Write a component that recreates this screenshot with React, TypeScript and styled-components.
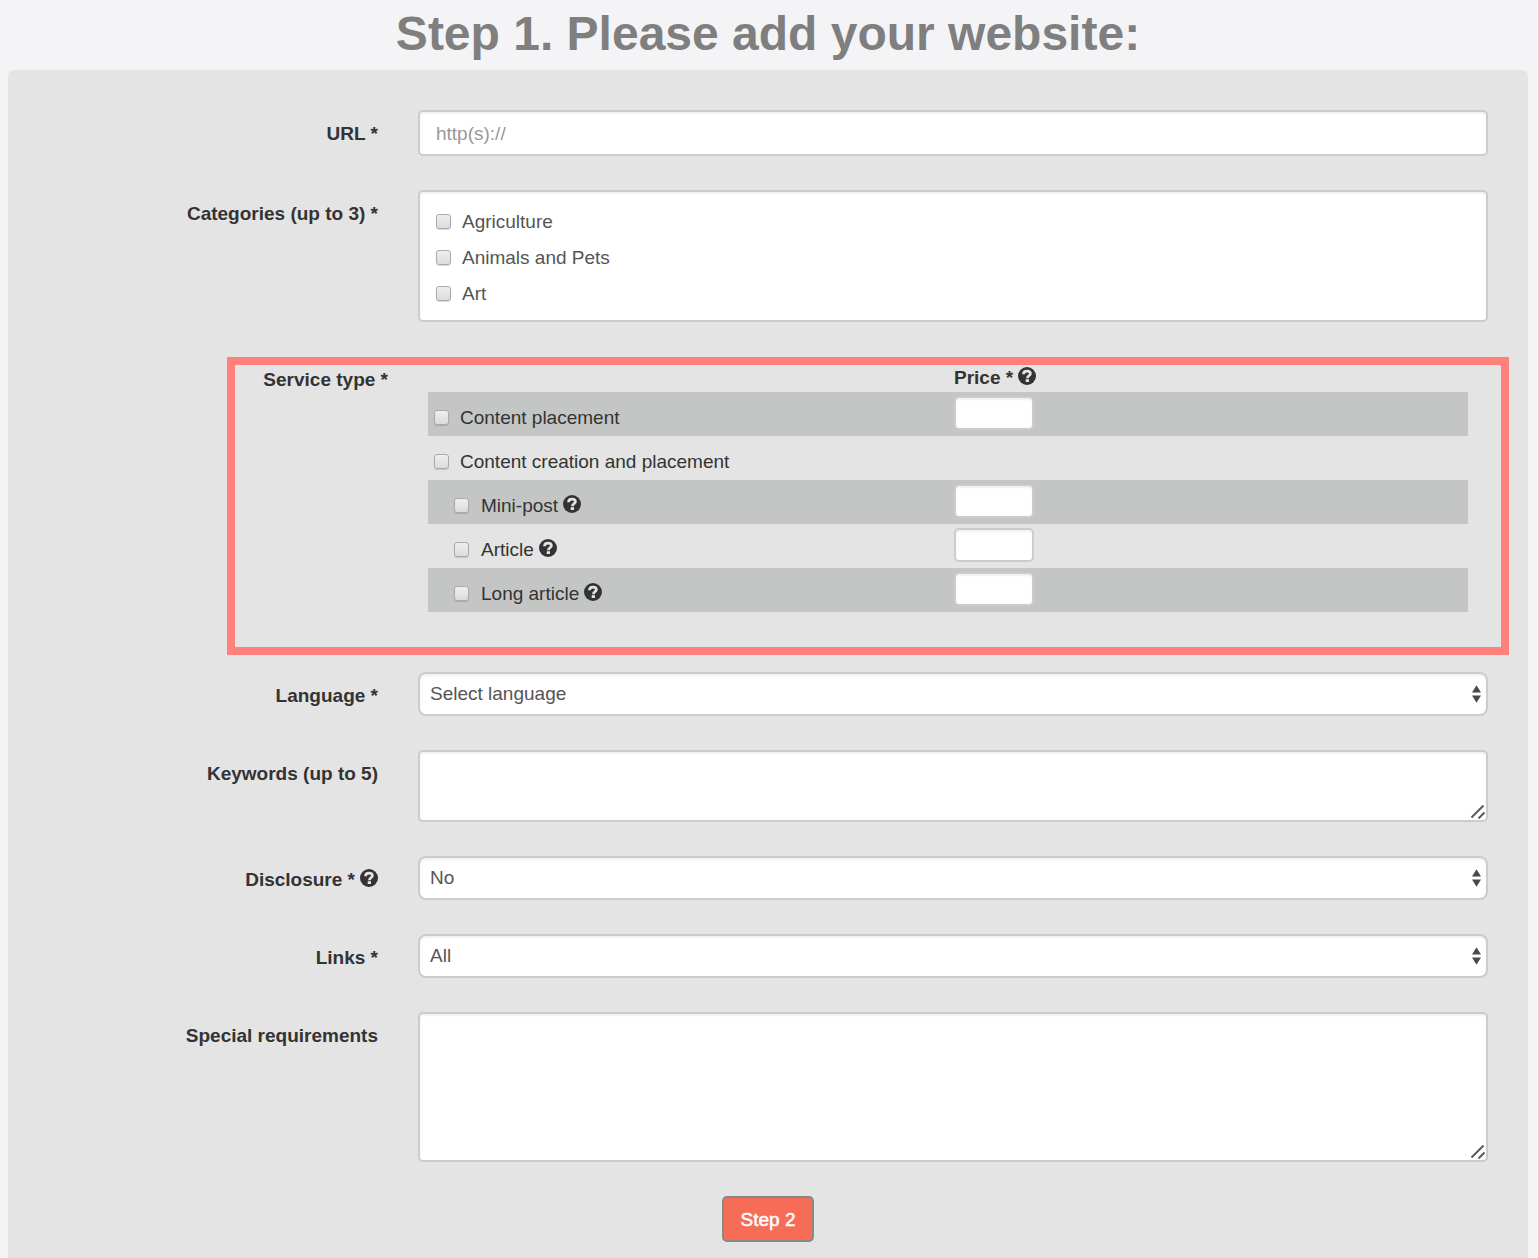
import React from 'react';
import styled, { createGlobalStyle, css } from 'styled-components';

const GlobalStyle = createGlobalStyle`
  *, *::before, *::after { box-sizing: border-box; }
  body {
    margin: 0;
    background: #f4f4f7;
    color: #333;
    font: 19px/24px "Helvetica Neue", "Liberation Sans", Arial, sans-serif;
  }
`;

const Page = styled.main`
  padding: 0 10px 0 8px;
`;

const Title = styled.h1`
  margin: 0;
  padding: 6px 0 8px;
  color: #7f7f7f;
  font-size: 48px;
  line-height: 56px;
  text-align: center;
`;

const Panel = styled.form`
  display: flex;
  flex-direction: column;
  gap: 34px;
  padding: 40px 20px;
  border-radius: 6px;
  background: #e4e4e4;
`;

const Row = styled.div`
  display: grid;
  grid-template-columns: 1fr 3fr;
`;

const labelText = css`
  padding: 12px 20px 0 0;
  font-weight: bold;
  text-align: right;
`;

const Label = styled.label`
  ${labelText}
`;

const GroupLabel = styled.div`
  ${labelText}
`;

const Field = styled.div`
  position: relative;
  margin: 0 20px;
`;

const box = css`
  display: block;
  width: 100%;
  border: 2px solid #ccc;
  border-radius: 5px;
  background: #fff;
  box-shadow: inset 0 2px 2px rgba(0, 0, 0, 0.06);
  color: #555;
  font: inherit;
  outline: none;
`;

const TextInput = styled.input`
  ${box}
  height: 46px;
  padding: 2px 16px 0;
  &::placeholder { color: #999; opacity: 1; }
`;

const TextArea = styled.textarea<{ $height: number }>`
  ${box}
  height: ${(p) => p.$height}px;
  padding: 8px 16px;
  resize: vertical;
  &::-webkit-resizer { display: none; }
`;

const Select = styled.select`
  ${box}
  height: 44px;
  padding: 0 30px 0 10px;
  border-radius: 8px;
  appearance: none;
`;

const Arrows = styled.svg`
  position: absolute;
  top: 12px;
  right: 6px;
  pointer-events: none;
`;

const Grip = styled.svg`
  position: absolute;
  right: 3px;
  bottom: 3px;
  pointer-events: none;
`;

const CategoryList = styled.div`
  ${box}
  padding: 11px 16px 9px;
`;

const CheckLabel = styled.label<{ $nested?: boolean }>`
  display: flex;
  align-items: center;
  gap: ${(p) => (p.$nested ? 12 : 11)}px;
  height: 36px;
  padding-left: ${(p) => (p.$nested ? 20 : 0)}px;
`;

const Check = styled.input.attrs({ type: 'checkbox' })`
  appearance: none;
  width: 15px;
  height: 15px;
  margin: 0;
  border: 1px solid #aaa;
  border-radius: 3px;
  background: linear-gradient(#efefef, #dcdcdc);
  box-shadow: 0 1px 1px rgba(0, 0, 0, 0.15);
  &:checked { background: #777; }
`;

const WithHelp = styled.span`
  display: inline-flex;
  align-items: center;
  gap: 5px;
  svg { margin-bottom: 4px; }
`;

const CheckText = styled(WithHelp)`
  padding-top: 2px;
`;

const ServiceRow = styled(Row)`
  position: relative;
  &::after {
    content: '';
    position: absolute;
    inset: 1px -1px -17px 199px;
    border: 8px solid #ff7f7b;
    pointer-events: none;
  }
`;

const ServiceLabel = styled(GroupLabel)`
  padding-right: 10px;
`;

const ServiceArea = styled.div`
  padding: 0 40px 26px 30px;
`;

const ServiceTable = styled.table`
  width: 100%;
  table-layout: fixed;
  border-collapse: collapse;
  th {
    height: 36px;
    padding: 10px 6px 2px;
    line-height: 24px;
    text-align: left;
  }
  td {
    height: 44px;
    padding: 4px 6px;
    vertical-align: top;
  }
  td:first-child { padding-top: 7px; padding-bottom: 0; }
  tbody tr:nth-child(odd) { background: #c4c6c5; }
`;

const PriceInput = styled.input`
  ${box}
  width: 80px;
  height: 34px;
  padding: 0 8px;
`;

const SubmitButton = styled.button`
  align-self: center;
  min-width: 92px;
  height: 46px;
  padding: 2px 16px 0;
  border: 2px solid #888;
  border-radius: 5px;
  background: #f76c57;
  color: #fff;
  font: inherit;
  -webkit-text-stroke: 0.5px #fff;
`;

const HelpIcon = () => (
  <svg width="18" height="18" viewBox="0 0 18 18" aria-hidden="true">
    <circle cx="9" cy="9" r="9" fill="#333" />
    <path d="M5.500 7.200C5.500 5 7 4.200 9 4.200s3.400 0.900 3.400 2.600C12.400 8.800 9.400 8.600 9.400 11.200" fill="none" stroke="#e3e3e3" strokeWidth="2.700" />
    <rect x="7.700" y="12.200" width="3.300" height="2.800" fill="#e3e3e3" />
  </svg>
);

const SelectField = ({ id, value }: { id: string; value: string }) => (
  <Field>
    <Select id={id} defaultValue={value}>
      <option>{value}</option>
    </Select>
    <Arrows width="10" height="20" viewBox="0 0 10 20" aria-hidden="true">
      <path d="M4.500 1.300 9 8.500H0zM4.500 18.700 0 11.500H9z" fill="#4a4a4a" />
    </Arrows>
  </Field>
);

const AreaField = ({ id, height }: { id: string; height: number }) => (
  <Field>
    <TextArea id={id} $height={height} />
    <Grip width="14" height="14" viewBox="0 0 14 14" aria-hidden="true">
      <path d="M0.500 12.500 12.500 0.500M7.500 13.500 13.500 7.500" stroke="#5a5a5a" strokeWidth="2" />
    </Grip>
  </Field>
);

const categories = ['Agriculture', 'Animals and Pets', 'Art'];

const services = [
  { name: 'Content placement', price: true },
  { name: 'Content creation and placement' },
  { name: 'Mini-post', nested: true, help: true, price: true },
  { name: 'Article', nested: true, help: true, price: true },
  { name: 'Long article', nested: true, help: true, price: true },
];

export default function App() {
  return (
    <Page>
      <GlobalStyle />
      <Title>Step 1. Please add your website:</Title>
      <Panel onSubmit={(e) => e.preventDefault()}>
        <Row>
          <Label htmlFor="url">URL *</Label>
          <Field>
            <TextInput id="url" type="text" placeholder="http(s)://" />
          </Field>
        </Row>
        <Row role="group" aria-labelledby="categories">
          <GroupLabel id="categories">Categories (up to 3) *</GroupLabel>
          <Field>
            <CategoryList>
              {categories.map((name) => (
                <CheckLabel key={name}>
                  <Check />
                  <CheckText>{name}</CheckText>
                </CheckLabel>
              ))}
            </CategoryList>
          </Field>
        </Row>
        <ServiceRow role="group" aria-labelledby="services">
          <ServiceLabel id="services">Service type *</ServiceLabel>
          <ServiceArea>
            <ServiceTable>
              <thead>
                <tr>
                  <th />
                  <th scope="col">
                    <WithHelp>Price * <HelpIcon /></WithHelp>
                  </th>
                </tr>
              </thead>
              <tbody>
                {services.map((s) => (
                  <tr key={s.name}>
                    <td>
                      <CheckLabel $nested={s.nested}>
                        <Check />
                        <CheckText>
                          {s.name}
                          {s.help && <HelpIcon />}
                        </CheckText>
                      </CheckLabel>
                    </td>
                    <td>{s.price && <PriceInput type="text" aria-label={s.name + ' price'} />}</td>
                  </tr>
                ))}
              </tbody>
            </ServiceTable>
          </ServiceArea>
        </ServiceRow>
        <Row>
          <Label htmlFor="language">Language *</Label>
          <SelectField id="language" value="Select language" />
        </Row>
        <Row>
          <Label htmlFor="keywords">Keywords (up to 5)</Label>
          <AreaField id="keywords" height={72} />
        </Row>
        <Row>
          <Label htmlFor="disclosure">
            <WithHelp>Disclosure * <HelpIcon /></WithHelp>
          </Label>
          <SelectField id="disclosure" value="No" />
        </Row>
        <Row>
          <Label htmlFor="links">Links *</Label>
          <SelectField id="links" value="All" />
        </Row>
        <Row>
          <Label htmlFor="special">Special requirements</Label>
          <AreaField id="special" height={150} />
        </Row>
        <SubmitButton type="submit">Step 2</SubmitButton>
      </Panel>
    </Page>
  );
}
